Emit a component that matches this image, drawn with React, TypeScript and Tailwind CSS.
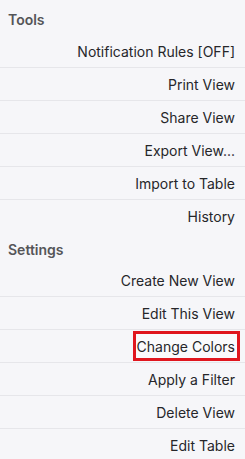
const TOOLS = [
  "Notification Rules [OFF]",
  "Print View",
  "Share View",
  "Export View...",
  "Import to Table",
  "History",
];

const SETTINGS = [
  "Create New View",
  "Edit This View",
  "Change Colors",
  "Apply a Filter",
  "Delete View",
  "Edit Table",
];

const Row = ({ label, last, marked }: { label: string; last: boolean; marked?: boolean }) => (
  <div
    className={`flex h-[33px] items-center justify-end pr-[10px] ${last ? "" : "border-b border-[#e6e6ea]"}`}
  >
    {marked ? (
      <span className="-mr-[5px] flex h-[30px] items-center border-[3px] border-[#e0161e] bg-[#fafafc] pr-[2px] pl-[1px]">
        {label}
      </span>
    ) : (
      <span>{label}</span>
    )}
  </div>
);

const App = () => {
  return (
    <main className="h-[459px] w-[245px] overflow-hidden bg-[#f6f6f9] font-['Inter',sans-serif] text-[14px] text-[#26262a]">
      <h2 className="flex h-[35px] items-end pb-[5px] pl-[8px] font-semibold text-[#555558]">Tools</h2>
      <section>
        {TOOLS.map((t, i) => (
          <Row key={t} label={t} last={i === TOOLS.length - 1} />
        ))}
      </section>
      <h2 className="flex h-[31px] items-center pt-[1px] pl-[8px] font-semibold text-[#555558]">Settings</h2>
      <section>
        {SETTINGS.map((t, i) => (
          <Row key={t} label={t} last={i === SETTINGS.length - 1} marked={t === "Change Colors"} />
        ))}
      </section>
    </main>
  );
};

export default App;
